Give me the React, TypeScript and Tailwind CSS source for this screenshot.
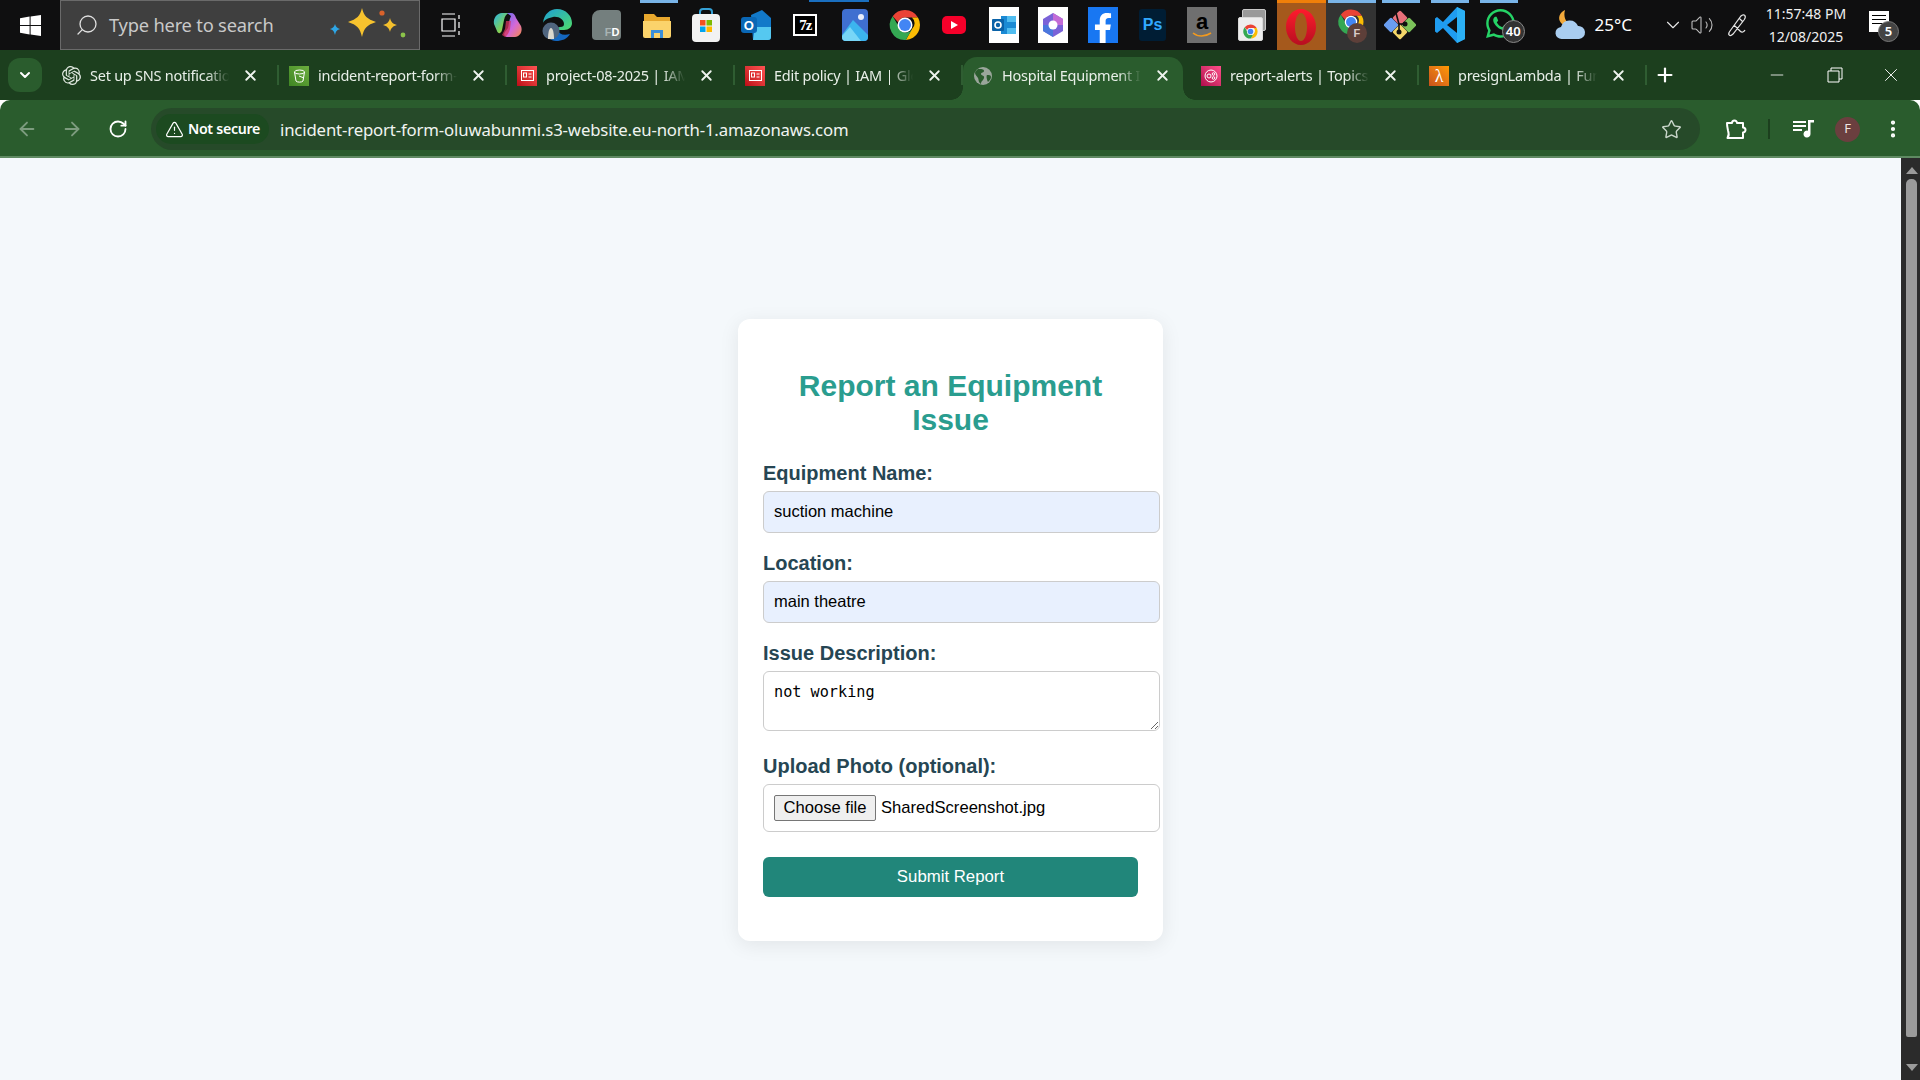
import React from 'react';
import { SiOpenai } from 'react-icons/si';
import { FaFacebookF, FaWhatsapp } from 'react-icons/fa';
import { ArrowLeft, ArrowRight, RotateCw, TriangleAlert, Star, EllipsisVertical, ChevronDown, Plus, X, Minus, Search, Volume2 } from 'lucide-react';

const UI_FONT = 'font-["Noto_Sans","Open_Sans",sans-serif]';

function ChromeIcon({ size = 30 }: { size?: number }) {
  return (
    <svg width={size} height={size} viewBox="0 0 48 48">
      <path d="M24 4a20 20 0 0 1 17.3 10H24a10 10 0 0 0-9.3 6.3L7.6 12.2A20 20 0 0 1 24 4z" fill="#ea4335" />
      <path d="M41.3 14A20 20 0 0 1 25 44l8.6-15a10 10 0 0 0-.4-15z" fill="#fbbc04" />
      <path d="M7.6 12.2A20 20 0 0 0 25 44l8.4-14.6A10 10 0 0 1 15 25z" fill="#34a853" />
      <circle cx="24" cy="24" r="10" fill="#fff" />
      <circle cx="24" cy="24" r="8" fill="#4285f4" />
    </svg>
  );
}

function WindowsLogo() {
  return (
    <svg width="21" height="21" viewBox="0 0 21 21" fill="#fff">
      <path d="M0 3.2 9.6 1.6v8.3H0zM10.6 1.4 21 0v9.9H10.6zM0 11h9.6v8.4L0 17.8zM10.6 11H21v10l-10.4-1.5z" />
    </svg>
  );
}

function Sparkles() {
  return (
    <svg width="80" height="40" viewBox="0 0 80 40">
      <path d="M33 3c2 8 5 11 14 14-9 3-12 6-14 15-2-9-5-12-14-15 9-3 12-6 14-14z" fill="#f7c32e" />
      <path d="M61 13c1 4 3 6 7 7-4 1-6 3-7 7-1-4-3-6-7-7 4-1 6-3 7-7z" fill="#f3bf2d" />
      <path d="M6 19c1 3 2 4 5 5-3 1-4 2-5 6-1-4-2-5-5-6 3-1 4-2 5-5z" fill="#2ea6e6" />
      <circle cx="53" cy="8" r="2.6" fill="#d9622b" />
      <circle cx="74" cy="30" r="2.4" fill="#8bc34a" />
    </svg>
  );
}

function TaskCell({ children, active, focused }: { children: React.ReactNode; active?: boolean; focused?: boolean }) {
  return (
    <div
      className={`flex h-[50px] w-[49.6px] shrink-0 items-center justify-center ${
        active ? 'border-t-[3px] border-[#f07f09] bg-[#a5591c]' : focused ? 'bg-[#333333]' : ''
      }`}
    >
      {children}
    </div>
  );
}

function TaskIcons() {
  return (
    <div className="flex">
      <TaskCell>
        <svg width="30" height="30" viewBox="0 0 30 30">
          <defs>
            <linearGradient id="copA" x1="0" y1="0" x2="1" y2="1">
              <stop offset="0" stopColor="#28b5e8" />
              <stop offset="0.6" stopColor="#7ccf5a" />
              <stop offset="1" stopColor="#f4c63d" />
            </linearGradient>
            <linearGradient id="copB" x1="0" y1="0" x2="1" y2="1">
              <stop offset="0" stopColor="#5a6df0" />
              <stop offset="0.55" stopColor="#d468d8" />
              <stop offset="1" stopColor="#f58a4a" />
            </linearGradient>
          </defs>
          <path d="M9 3h7c-3 1-4 3-5 7l-2 10c-1 4-4 4-5 1L1 14C0 8 4 3 9 3z" fill="url(#copA)" />
          <path d="M14 3h4c3 0 4 2 5 5l5 8c2 5-1 11-6 11h-8c-2 0-4-2-2-5l3-4c1-4 1-8 3-12z" fill="url(#copB)" />
          <path d="M13 11h5l-1 8c-1 3-2 6-5 8l-3-2 3-6z" fill="#d8345f" opacity="0.75" />
        </svg>
      </TaskCell>
      <TaskCell>
        <svg width="32" height="34" viewBox="0 0 32 34">
          <defs>
            <linearGradient id="edgeG" x1="0" y1="0" x2="1" y2="1">
              <stop offset="0" stopColor="#1c9fd8" />
              <stop offset="1" stopColor="#4fdc6a" />
            </linearGradient>
          </defs>
          <path d="M2 15C3 6 9 1 16 1c9 0 15 7 15 14 0 4-3 7-8 7h-6c-1-2 0-3 2-3 3 0 4-1 4-3 0-4-5-8-11-7-5 1-9 3-10 6z" fill="url(#edgeG)" />
          <path d="M17 22c1 4 5 6 12 4-3 5-8 7-14 7-3 0-5-1-7-3z" fill="#1467c0" />
          <circle cx="10" cy="23" r="8.500" fill="#50657f" />
          <path d="M7 31c0-6 1-11 3-11s3 5 3 11z" fill="#dcd8cf" />
        </svg>
      </TaskCell>
      <TaskCell>
        <div className="flex h-[30px] w-[29px] items-end justify-end rounded-[4px] rounded-tl-[8px] bg-[#747f7e] pb-[2px] pr-[2px] font-['Liberation_Sans',sans-serif] text-[11px] font-bold leading-none">
          <span className="text-[#a8b3b3]">F</span>
          <span className="text-white">D</span>
        </div>
      </TaskCell>
      <TaskCell>
        <svg width="30" height="32" viewBox="0 0 30 32">
          <path d="M2 5h10l3 3h13v20H2z" fill="#e8a82e" />
          <path d="M1 12h28v15a2 2 0 0 1-2 2H3a2 2 0 0 1-2-2z" fill="#fbd36b" />
          <path d="M9 21h12v8H9z" fill="#3b8fd9" />
          <path d="M12 24h6v5h-6z" fill="#fbd36b" />
        </svg>
      </TaskCell>
      <TaskCell>
        <svg width="30" height="36" viewBox="0 0 30 36">
          <path d="M9 9V5a3 3 0 0 1 3-3h6a3 3 0 0 1 3 3v4" stroke="#35a1d6" strokeWidth="2" fill="none" />
          <rect x="1" y="7" width="28" height="28" rx="4" fill="#f2f2f2" />
          <rect x="9" y="13" width="5.5" height="5.5" fill="#f25022" />
          <rect x="15.5" y="13" width="5.5" height="5.5" fill="#7fba00" />
          <rect x="9" y="19.5" width="5.5" height="5.5" fill="#00a4ef" />
          <rect x="15.5" y="19.5" width="5.5" height="5.5" fill="#ffb900" />
        </svg>
      </TaskCell>
      <TaskCell>
        <div className="relative h-[32px] w-[30px]">
          <svg width="30" height="32" viewBox="0 0 30 32">
            <path d="M10 6 21 1l9 8v19a3 3 0 0 1-3 3H12z" fill="#1279c9" />
            <path d="M14 18h16v10a3 3 0 0 1-3 3H12z" fill="#55c8f0" />
          </svg>
          <span className="absolute left-0 top-[8px] flex h-[16px] w-[16px] items-center justify-center rounded-[3px] bg-[#0a67b5] font-['Liberation_Sans',sans-serif] text-[13px] font-bold leading-none text-white">
            O
          </span>
        </div>
      </TaskCell>
      <TaskCell>
        <div className="flex h-[22px] w-[24px] items-center justify-center bg-white">
          <div className="flex h-[18px] w-[20px] items-center justify-center bg-black font-['Liberation_Serif',serif] text-[15px] font-bold leading-none tracking-[-1px] text-white">
            7z
          </div>
        </div>
      </TaskCell>
      <TaskCell>
        <svg width="26" height="32" viewBox="0 0 26 32">
          <rect width="26" height="32" rx="4" fill="#3f6fd0" />
          <path d="M0 26 11 11l15 15v2a4 4 0 0 1-4 4H4a4 4 0 0 1-4-4z" fill="#3cb4ee" />
          <path d="M0 27 8 18l11 14H4a4 4 0 0 1-4-4z" fill="#78d6f7" />
          <circle cx="19" cy="8" r="3" fill="#e9eefc" />
        </svg>
      </TaskCell>
      <TaskCell>
        <ChromeIcon size={36} />
      </TaskCell>
      <TaskCell>
        <div className="flex h-[18px] w-[24px] items-center justify-center rounded-[5px] bg-[#f6002a]">
          <div className="h-0 w-0 border-y-[4px] border-l-[7px] border-y-transparent border-l-white" />
        </div>
      </TaskCell>
      <TaskCell>
        <div className="flex h-[36px] w-[30px] items-center justify-center bg-white">
          <svg width="24" height="22" viewBox="0 0 24 22">
            <path d="M9 2h13a2 2 0 0 1 2 2v14a2 2 0 0 1-2 2H9z" fill="#1a8ad4" />
            <path d="M15 2h9v6h-9zM15 14h9v6h-9z" fill="#50bdf0" />
            <rect x="0" y="5" width="12" height="12" rx="1" fill="#0a62a8" />
            <circle cx="6" cy="11" r="3" fill="none" stroke="#fff" strokeWidth="1.6" />
          </svg>
        </div>
      </TaskCell>
      <TaskCell>
        <div className="flex h-[36px] w-[30px] items-center justify-center bg-white">
          <svg width="24" height="26" viewBox="0 0 24 26">
            <path d="M12 1 22 7v12l-10 6L2 19V7z" fill="#7a62d8" />
            <path d="M12 1 22 7v6H12z" fill="#c36bd6" />
            <path d="M2 13h10v12L2 19z" fill="#4a77dd" />
            <circle cx="12" cy="13" r="4.5" fill="#fff" />
          </svg>
        </div>
      </TaskCell>
      <TaskCell>
        <div className="flex h-[36px] w-[30px] items-end justify-center bg-[#1877f2]">
          <FaFacebookF className="text-white" size={30} />
        </div>
      </TaskCell>
      <TaskCell>
        <div className="flex h-[32px] w-[27px] items-center justify-center rounded-[3px] bg-[#001d34] font-['Liberation_Sans',sans-serif] text-[16px] font-bold leading-none text-[#31a8ff]">
          Ps
        </div>
      </TaskCell>
      <TaskCell>
        <div className="flex h-[36px] w-[30px] flex-col items-center justify-center bg-[#6f6f6f] font-['Liberation_Sans',sans-serif] text-[22px] font-bold leading-[20px] text-black">
          a
          <svg width="20" height="6" viewBox="0 0 20 6">
            <path d="M1 1c5 4 12 4 18 0" stroke="#f29a1f" strokeWidth="1.6" fill="none" />
          </svg>
        </div>
      </TaskCell>
      <TaskCell>
        <div className="relative h-[32px] w-[28px]">
          <div className="absolute right-0 top-0 h-[22px] w-[24px] rounded-[2px] border border-[#c9c9c9] bg-[#9a9a9a]" />
          <div className="absolute bottom-0 left-0 flex h-[24px] w-[25px] items-end justify-center rounded-[2px] border border-[#d9d9d9] bg-[#eeeeee]">
            <ChromeIcon size={17} />
          </div>
        </div>
      </TaskCell>
      <TaskCell active>
        <svg width="30" height="36" viewBox="0 0 30 36">
          <defs>
            <linearGradient id="operaG" x1="0" y1="0" x2="0" y2="1">
              <stop offset="0" stopColor="#ff1b2d" />
              <stop offset="1" stopColor="#b70f20" />
            </linearGradient>
          </defs>
          <path fillRule="evenodd" d="M15 0c8.300 0 15 8 15 18s-6.700 18-15 18S0 28 0 18 6.700 0 15 0zm0 4c-3.500 0-6 6.300-6 14s2.500 14 6 14 6-6.300 6-14S18.500 4 15 4z" fill="url(#operaG)" />
        </svg>
      </TaskCell>
      <TaskCell focused>
        <div className="relative h-[36px] w-[30px]">
          <ChromeIcon size={30} />
          <span className="absolute -right-[1px] bottom-0 flex h-[20px] w-[20px] items-center justify-center rounded-full bg-[#5d3f39] font-['Liberation_Sans',sans-serif] text-[11px] font-bold leading-none text-[#d8ccc8]">
            F
          </span>
        </div>
      </TaskCell>
      <TaskCell>
        <svg width="32" height="32" viewBox="0 0 32 32">
          <path d="M16 8 24 16 16 24 8 16z" fill="#111" />
          <rect x="10.500" y="3.500" width="11" height="11" rx="1.500" transform="rotate(45 16 9)" fill="#e8707a" />
          <rect x="1.500" y="10.500" width="11" height="11" rx="1.500" transform="rotate(45 7 16)" fill="#6a9ef0" />
          <rect x="19.500" y="10.500" width="11" height="11" rx="1.500" transform="rotate(45 25 16)" fill="#7cc35a" />
          <rect x="10.500" y="17.500" width="11" height="11" rx="1.500" transform="rotate(45 16 23)" fill="#f5d769" />
          <path d="M12 4l3 11 0 8" stroke="#111" strokeWidth="1.600" fill="none" />
          <circle cx="15" cy="23" r="2.500" fill="#111" />
          <circle cx="21" cy="15" r="2.500" fill="#111" />
          <path d="M15 15l6 0" stroke="#111" strokeWidth="1.600" />
        </svg>
      </TaskCell>
      <TaskCell>
        <svg width="30" height="36" viewBox="0 0 30 36">
          <path d="M22 0 30 4v28l-8 4L8 21l-6 5-2-1.500v-13L2 10l6 5z" fill="#1f9cf0" />
          <path d="M22 0 30 4v28l-8 4z" fill="#2bb0f5" />
          <path d="M22 10 12 18l10 8z" fill="#0f0f10" />
        </svg>
      </TaskCell>
      <TaskCell>
        <div className="relative h-[36px] w-[32px]">
          <FaWhatsapp size={33} className="text-[#25d366]" />
          <span className="absolute -right-[9px] bottom-0 flex h-[23px] w-[23px] items-center justify-center rounded-full border border-[#888] bg-[#333] text-[13px] font-semibold leading-none text-white">
            40
          </span>
        </div>
      </TaskCell>
    </div>
  );
}

function Taskbar() {
  return (
    <div className={`relative flex h-[50px] shrink-0 items-center bg-[#0f0f10] ${UI_FONT} text-white`}>
      {/* running app indicators along the top edge */}
      <div className="absolute left-[640px] top-0 h-[3px] w-[38px] bg-[#79b4e8]" />
      <div className="absolute left-[809px] top-0 h-[2px] w-[60px] bg-[#1a6fc0]" />
      <div className="absolute left-[1328px] top-0 h-[3px] w-[48px] bg-[#79b4e8]" />
      <div className="absolute left-[1382px] top-0 h-[3px] w-[38px] bg-[#79b4e8]" />
      <div className="absolute left-[1431px] top-0 h-[3px] w-[38px] bg-[#79b4e8]" />
      <div className="absolute left-[1480px] top-0 h-[3px] w-[38px] bg-[#79b4e8]" />

      <div className="flex w-[60px] justify-center">
        <WindowsLogo />
      </div>
      <div className="flex h-[50px] w-[360px] items-center border border-[#6a6a6a] bg-[#3f3f3f] pl-[14px]">
        <Search size={24} strokeWidth={1.3} className="-scale-x-100 text-[#e0e0e0]" />
        <span className="ml-[10px] text-[18.3px] tracking-[-0.2px] text-[#c9c9c9]">Type here to search</span>
        <div className="ml-auto mr-[10px]">
          <Sparkles />
        </div>
      </div>
      <div className="flex w-[61px] justify-center">
        <svg width="20" height="24" viewBox="0 0 20 24" stroke="#fff" strokeWidth="1.2" fill="none">
          <path d="M1 1h13M1 23h13M1 6h13v12H1zM18 2v4M18 9v6M18 18v4" />
        </svg>
      </div>
      <div className="ml-[2px]">
        <TaskIcons />
      </div>

      <div className="ml-[29px] flex w-[34px] justify-center">
        <svg width="34" height="36" viewBox="0 0 34 36">
          <path d="M12 3c-5 2-8 8-4 13 3 3 8 3 11 0-6 1-9-6-7-13z" fill="#f2a93b" />
          <path d="M9 32a6 6 0 0 1-1-12 9 9 0 0 1 17-1 6.500 6.500 0 0 1 1 13z" fill="#a9cdf0" />
        </svg>
      </div>
      <span className="ml-[7px] text-[17px]">25°C</span>
      <ChevronDown size={22} strokeWidth={1.2} className="ml-[30px] text-[#e8e8e8]" />
      <Volume2 size={24} strokeWidth={1.1} className="ml-[6px] text-[#bdbdbd]" />
      <svg className="ml-[12px]" width="22" height="26" viewBox="0 0 22 26" fill="none" stroke="#e6e6e6" strokeWidth="1.2">
        <path d="M4 19c-3 4 0 6 3 3L18 8c3-4 0-7-3-4zM8 13l6 6c2 2 4 1 5-1M13 6l4 4" />
      </svg>
      <div className="ml-[13px] flex w-[90px] flex-col items-center text-[14px] leading-[23px] text-[#f0f0f0]">
        <span>11:57:48 PM</span>
        <span>12/08/2025</span>
      </div>
      <div className="relative ml-[18px] h-[34px] w-[24px]">
        <div className="absolute left-0 top-[3px] flex h-[21px] w-[20px] flex-col gap-[3px] bg-white px-[3px] pt-[4px]">
          <div className="h-[1px] bg-black" />
          <div className="h-[1px] bg-black" />
          <div className="h-[1px] bg-black" />
        </div>
        <span className="absolute -right-[6px] bottom-0 flex h-[21px] w-[21px] items-center justify-center rounded-full border border-[#777] bg-[#444] text-[13px] font-semibold leading-none text-white">
          5
        </span>
      </div>
    </div>
  );
}

function AwsFavicon({ from, to, children }: { from: string; to: string; children: React.ReactNode }) {
  return (
    <div className={`flex h-[20px] w-[20px] items-center justify-center bg-gradient-to-tr ${from} ${to}`}>
      {children}
    </div>
  );
}

const idCard = (
  <svg width="13" height="11" viewBox="0 0 13 11" fill="none" stroke="#fff" strokeWidth="1">
    <rect x="0.500" y="0.500" width="12" height="10" />
    <rect x="2.500" y="3" width="3" height="4" />
    <path d="M7.500 4h3M7.500 7h3" />
  </svg>
);

const tabs = [
  { title: 'Set up SNS notifications', icon: <SiOpenai size={19} className="text-[#dfe8df]" /> },
  {
    title: 'incident-report-form-',
    icon: (
      <AwsFavicon from="from-[#3f8624]" to="to-[#6cae3e]">
        <svg width="13" height="14" viewBox="0 0 13 14" fill="none" stroke="#fff" strokeWidth="1">
          <ellipse cx="6.500" cy="3" rx="5" ry="2" />
          <path d="M1.500 3l1.500 9c1 1.500 6 1.500 7 0l1.500-9M6 7l5 2" />
        </svg>
      </AwsFavicon>
    ),
  },
  {
    title: 'project-08-2025 | IAM',
    icon: (
      <AwsFavicon from="from-[#bd0816]" to="to-[#ff5252]">
        {idCard}
      </AwsFavicon>
    ),
  },
  {
    title: 'Edit policy | IAM | Global',
    icon: (
      <AwsFavicon from="from-[#bd0816]" to="to-[#ff5252]">
        {idCard}
      </AwsFavicon>
    ),
  },
  {
    title: 'Hospital Equipment Incident',
    active: true,
    icon: (
      <svg width="20" height="20" viewBox="0 0 20 20">
        <circle cx="10" cy="10" r="9" fill="#9aa69b" />
        <path d="M5 3c3 0 6 0 6 2s-3 1-3 3 4 1 3 4-3 3-3 6c-3-2-2-4-3-6S2 9 2 7s2-3 3-4zM14 9c2 0 4 0 4 2s-2 4-3 5c-1-2-2-6-1-7z" fill="#2a5c2d" />
      </svg>
    ),
  },
  {
    title: 'report-alerts | Topics',
    icon: (
      <AwsFavicon from="from-[#b0084d]" to="to-[#ff4f8b]">
        <svg width="14" height="14" viewBox="0 0 14 14" fill="none" stroke="#fff" strokeWidth="1">
          <circle cx="7" cy="7" r="6" />
          <circle cx="5" cy="7" r="2" />
          <circle cx="9.500" cy="5" r="1.300" />
          <circle cx="9.500" cy="9" r="1.300" />
        </svg>
      </AwsFavicon>
    ),
  },
  {
    title: 'presignLambda | Function',
    icon: (
      <AwsFavicon from="from-[#c8511b]" to="to-[#ff9900]">
        <span className="font-['Liberation_Serif',serif] text-[18px] leading-none text-white">λ</span>
      </AwsFavicon>
    ),
  },
];

function Tab({ title, icon, active }: { title: string; icon: React.ReactNode; active?: boolean }) {
  return (
    <div className="relative flex h-[50px] w-[228px] shrink-0 items-center pl-[10px] pt-[1px]">
      {active && (
        <div className="absolute bottom-0 left-0 right-[8px] top-[7px] rounded-t-[14px] bg-[#2a5c2d]">
          <div className="absolute -left-[12px] bottom-0 h-[12px] w-[12px] bg-[radial-gradient(circle_at_0_0,#1c3f1e_11.500px,#2a5c2d_12px)]" />
          <div className="absolute -right-[12px] bottom-0 h-[12px] w-[12px] bg-[radial-gradient(circle_at_100%_0,#1c3f1e_11.500px,#2a5c2d_12px)]" />
        </div>
      )}
      <div className="relative flex w-[20px] justify-center">{icon}</div>
      <div className="relative ml-[9px] w-[142px] overflow-hidden whitespace-nowrap text-[14.5px] tracking-[-0.25px] text-[#e8efe8] [mask-image:linear-gradient(to_right,black_82%,transparent_98%)]">
        {title}
      </div>
      <X size={17} strokeWidth={2.6} className="relative ml-[10px] text-[#eef3ee]" />
      {!active && <div className="absolute right-0 top-[15px] h-[20px] w-[2px] bg-[#2f5d32]" />}
    </div>
  );
}

function TabStrip() {
  return (
    <div className={`flex h-[50px] shrink-0 items-center bg-[#1c3f1e] ${UI_FONT}`}>
      <div className="ml-[8px] flex h-[34px] w-[34px] items-center justify-center rounded-[12px] bg-[#2a5c2d]">
        <ChevronDown size={16} strokeWidth={3} className="text-white" />
      </div>
      <div className="ml-[9px] flex">
        {tabs.map((t) => (
          <Tab key={t.title} title={t.title} icon={t.icon} active={t.active} />
        ))}
      </div>
      <Plus size={22} strokeWidth={2.4} className="ml-[7px] text-white" />
      <div className="ml-auto flex items-center text-white">
        <Minus size={20} strokeWidth={1} className="mr-[40px]" />
        <svg className="mr-[37px]" width="16" height="16" viewBox="0 0 16 16" fill="none" stroke="#fff" strokeWidth="1">
          <path d="M1 4h11v11H1zM4 4V1h11v11h-3" />
        </svg>
        <X size={22} strokeWidth={1} className="mr-[18px]" />
      </div>
    </div>
  );
}

function ExtensionIcon() {
  return (
    <svg width="24" height="24" viewBox="0 0 24 24" fill="none" stroke="#fff" strokeWidth="2" strokeLinejoin="round">
      <path d="M3 6h5a2.500 2.500 0 0 1 5 0h6v4.500a2.500 2.500 0 0 1 0 5V21H3.500c1.500-2.500 1.500-5 .5-7.500C3.500 11 3 9 3 6z" />
    </svg>
  );
}

function QueueIcon() {
  return (
    <svg width="22" height="20" viewBox="0 0 22 20" fill="#fff">
      <path d="M1 2h13v2H1zM1 6h13v2H1zM1 10h9v2H1zM16 1h6v2.500h-3.500V15a3.500 3.500 0 1 1-2.500-3.300z" />
    </svg>
  );
}

function Toolbar() {
  return (
    <div className={`flex h-[58px] shrink-0 items-center rounded-t-[10px] border-b-2 border-[#5f8a62] bg-[#2a5c2d] pt-[2px] ${UI_FONT}`}>
      <ArrowLeft size={22} strokeWidth={2} className="ml-[16px] text-[#7d9c7f]" />
      <ArrowRight size={22} strokeWidth={2} className="ml-[23px] text-[#7d9c7f]" />
      <RotateCw size={20} strokeWidth={2.2} className="ml-[25px] text-white" />
      <div className="ml-[23px] flex h-[42px] w-[1549px] items-center rounded-full bg-[#264a29]">
        <div className="ml-[5px] flex h-[30px] w-[113px] items-center justify-center gap-[4px] rounded-full bg-[#1c4a20] text-[14.2px] font-semibold tracking-[-0.3px] text-white">
          <TriangleAlert size={19} strokeWidth={1.5} />
          Not secure
        </div>
        <span className="ml-[11px] pt-[1px] text-[16.75px] tracking-[-0.15px] text-[#f0f4f0]">
          incident-report-form-oluwabunmi.s3-website.eu-north-1.amazonaws.com
        </span>
        <Star size={21} strokeWidth={1.6} className="ml-auto mr-[18px] text-[#c9d6ca]" />
      </div>
      <div className="ml-[24px]">
        <ExtensionIcon />
      </div>
      <div className="ml-[20px] h-[20px] w-[2px] bg-[#1c3f1e]" />
      <div className="ml-[22px]">
        <QueueIcon />
      </div>
      <div className="ml-[21px] flex h-[25px] w-[25px] items-center justify-center rounded-full bg-[#6b3f3f] text-[13px] text-[#f0e4e0]">
        F
      </div>
      <EllipsisVertical size={22} strokeWidth={2.6} className="ml-[22px] text-white" />
    </div>
  );
}

function Scrollbar() {
  return (
    <div className="flex w-[19px] shrink-0 flex-col items-center bg-[#2b2b2b] pl-[2px]">
      <div className="mt-[9px] h-0 w-0 border-x-[6px] border-b-[7px] border-x-transparent border-b-[#9b9b9b]" />
      <div className="mt-[5px] w-[11px] flex-1 rounded-t-[5px] rounded-b-[2px] bg-[#9b9b9b]" />
      <div className="mb-[9px] mt-[27px] h-0 w-0 border-x-[6px] border-t-[7px] border-x-transparent border-t-[#9b9b9b]" />
    </div>
  );
}

function Label({ children }: { children: React.ReactNode }) {
  return <label className="-mt-[1px] mb-[6px] block text-[20px] font-bold leading-[23px] text-[#264653]">{children}</label>;
}

function ReportForm() {
  const filled = 'block h-[42px] w-[397px] rounded-[6px] border border-[#cccccc] bg-[#e8f0fe] px-[10px] pb-[2px] text-[16.5px] text-black outline-none';
  return (
    <div className="mx-auto w-[425px] rounded-[12px] bg-white px-[25px] pb-[44px] pt-[50px] font-['Liberation_Sans',Arial,sans-serif] shadow-[0_4px_20px_rgba(0,0,0,0.08)]">
      <h1 className="mb-[26px] px-[20px] text-center text-[30px] font-bold leading-[34px] text-[#2a9d8f]">Report an Equipment Issue</h1>
      <form className="flex flex-col" onSubmit={(e) => e.preventDefault()}>
        <Label>Equipment Name:</Label>
        <input className={filled} value="suction machine" readOnly />

        <div className="mt-[20px]">
          <Label>Location:</Label>
        </div>
        <input className={filled} value="main theatre" readOnly />

        <div className="mt-[20px]">
          <Label>Issue Description:</Label>
        </div>
        <textarea
          className="block h-[60px] w-[397px] rounded-[6px] border border-[#cccccc] bg-white px-[10px] pb-[9px] pt-[11px] font-['DejaVu_Sans_Mono',monospace] text-[15.2px] leading-[18px] text-black outline-none"
          value="not working"
          readOnly
        />

        <div className="mt-[25px]">
          <Label>Upload Photo (optional):</Label>
        </div>
        <div className="flex h-[48px] w-[397px] items-center rounded-[6px] border border-[#cccccc] bg-white px-[10px] text-[16.6px] text-black">
          <button type="button" className="flex h-[26px] w-[102px] items-center justify-center rounded-[2px] border border-[#767676] bg-[#efefef]">
            Choose file
          </button>
          <span className="ml-[5px]">SharedScreenshot.jpg</span>
        </div>

        <button type="submit" className="mt-[25px] flex h-[40px] w-[375px] items-center justify-center rounded-[6px] bg-[#21867a] text-[16.8px] text-white">
          Submit Report
        </button>
      </form>
    </div>
  );
}

export default function App() {
  return (
    <div className="flex h-screen w-screen flex-col overflow-hidden">
      <Taskbar />
      <TabStrip />
      <Toolbar />
      <div className="flex min-h-0 flex-1">
        <main className="min-w-0 flex-1 bg-[#f4f8fb] pt-[161px]">
          <ReportForm />
        </main>
        <Scrollbar />
      </div>
    </div>
  );
}
